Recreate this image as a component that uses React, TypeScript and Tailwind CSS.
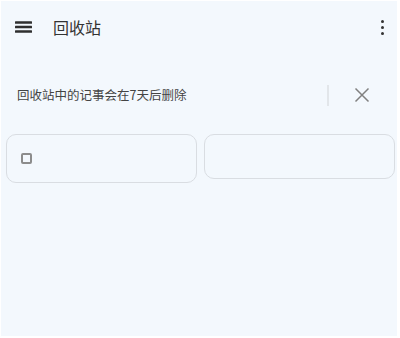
export default function App() {
  return (
    <div className="h-[338px] w-[400px] overflow-hidden bg-white pb-[2px] pl-px pr-[3px] pt-px">
      <div
        className="flex h-full flex-col bg-[#f3f8fd]"
        style={{ fontFamily: '"Noto Sans CJK SC", "Noto Sans", sans-serif' }}
      >
        {/* top bar */}
        <div className="flex h-[52px] items-center pl-[14px] pr-[12px]">
          <svg width="17" height="12" viewBox="0 0 17 12" className="shrink-0">
            <rect x="0" y="0.25" width="17" height="2.5" rx="0.5" fill="#2f2f2f" />
            <rect x="0" y="4.75" width="17" height="2.5" rx="0.5" fill="#2f2f2f" />
            <rect x="0" y="9.25" width="17" height="2.5" rx="0.5" fill="#2f2f2f" />
          </svg>
          <span className="ml-[21px] text-[16px] leading-none text-[#333]">回收站</span>
          <div className="ml-auto flex flex-col items-center gap-[3px] pr-[1px]">
            <span className="h-[3px] w-[3px] rounded-full bg-[#333]" />
            <span className="h-[3px] w-[3px] rounded-full bg-[#333]" />
            <span className="h-[3px] w-[3px] rounded-full bg-[#333]" />
          </div>
        </div>

        {/* notice */}
        <div className="mt-[22px] flex h-[40px] items-center pl-[16px]">
          <span className="text-[12.5px] leading-none text-[#444]">回收站中的记事会在7天后删除</span>
          <div className="ml-auto h-[21px] w-[2px] bg-[#e2e6ea]" />
          <button className="ml-[25px] mr-[27px] flex h-[16px] w-[16px] items-center justify-center">
            <svg width="16" height="16" viewBox="0 0 16 16">
              <path d="M1.5 1.5 L14.5 14.5 M14.5 1.5 L1.5 14.5" stroke="#808080" strokeWidth="1.5" fill="none" />
            </svg>
          </button>
        </div>

        {/* cards */}
        <div className="mt-[19px] flex items-start gap-[7px] pl-[5px]">
          <div className="flex h-[49px] w-[191px] items-center rounded-[10px] border-[1.5px] border-[#d9dde2] pl-[14px]">
            <span className="h-[11px] w-[11px] rounded-[2px] border-2 border-[#8c8c8c]" />
          </div>
          <div className="h-[45px] w-[191px] rounded-[10px] border-[1.5px] border-[#d9dde2]" />
        </div>
      </div>
    </div>
  );
}
